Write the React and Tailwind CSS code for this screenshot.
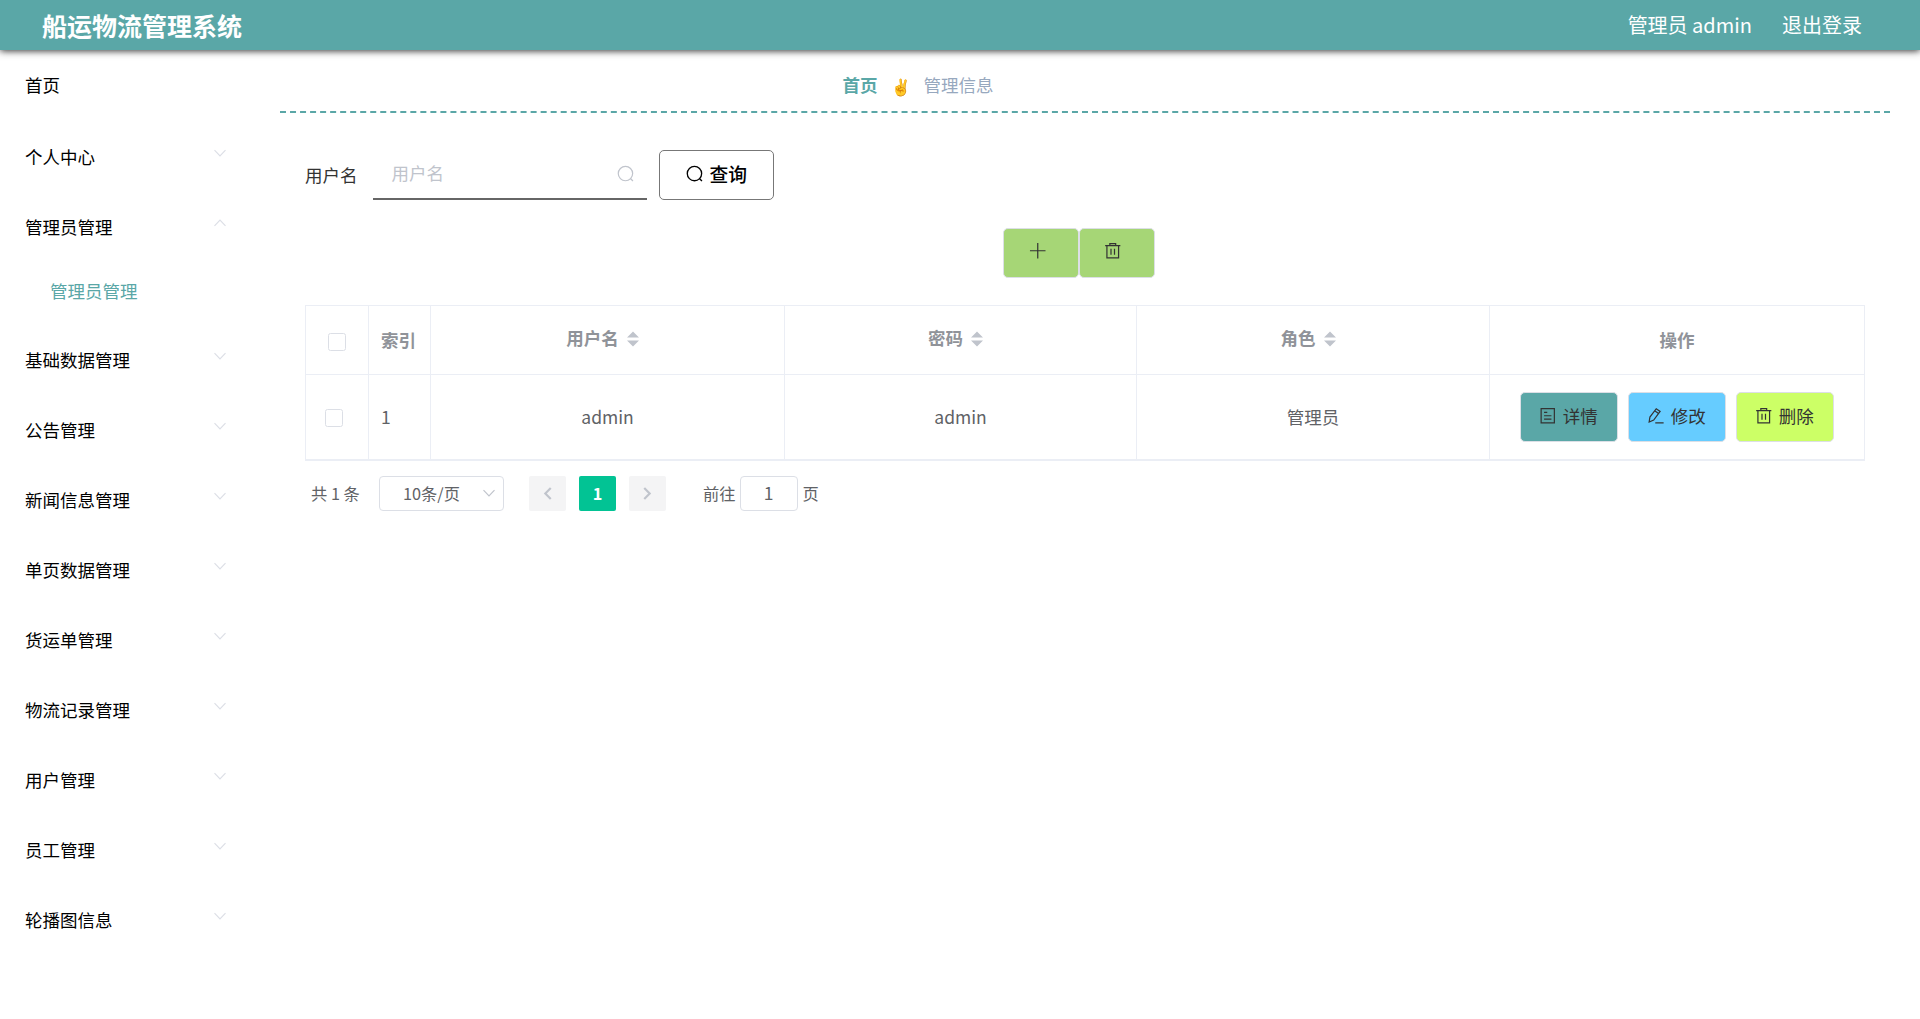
const menu = ['基础数据管理', '公告管理', '新闻信息管理', '单页数据管理', '货运单管理', '物流记录管理', '用户管理', '员工管理', '轮播图信息'];

const Icon = ({ className = '', children, sw = 1.25 }) => (
  <svg viewBox="0 0 18 18" className={`h-[17.5px] w-[17.5px] shrink-0 ${className}`} fill="none" stroke="currentColor" strokeWidth={sw}>
    {children}
  </svg>
);
const Search = ({ className, sw }) => (
  <Icon className={className} sw={sw}><circle cx="8.7" cy="8.8" r="7.4" /><path d="M13.8 13.9l2.6 2.6" /></Icon>
);
const Trash = ({ className }) => (
  <Icon className={className}><path d="M1.2 3.8h15.6M6 3.8V1.6h6v2.2M3 3.8v12.6h12V3.8M7.2 7v6M10.8 7v6" /></Icon>
);
const Plus = ({ className }) => <Icon className={className}><path d="M9 1v16M1 9h16" /></Icon>;
const Doc = () => <Icon><path d="M2.2 1.6h13.6v14.8H2.2zM5.2 5.5h3.3M5.2 9h7.6M5.2 12.5h7.6" /></Icon>;
const Edit = () => <Icon><path d="M2.2 15.4l.8-5 6.5-8.6 4 2.8-6.6 8.8zM7.9 3.9l4 2.8M8.5 16.4h8.6" /></Icon>;
const Chevron = ({ up, className = '' }) => (
  <svg viewBox="0 0 14 8" className={`h-2 w-3.5 ${className}`} fill="none" stroke="currentColor" strokeWidth="1.2">
    <path d={up ? 'M1.5 6.8L7 1.2l5.5 5.6' : 'M1.5 1.2L7 6.8l5.5-5.6'} />
  </svg>
);

const MenuRow = ({ text, up }) => (
  <div className="flex h-[70px] items-center justify-between pl-[25px] pr-[23px]">
    <span>{text}</span>
    <Chevron up={up} className="mb-2 text-[#dcdfe6]" />
  </div>
);

const Checkbox = () => <span className="block h-[18px] w-[18px] rounded-[2.5px] border border-[#dcdfe6] bg-white" />;
const Sort = () => (
  <svg viewBox="0 0 12 16" className="ml-2 mt-px h-4 w-3" fill="#c0c4cc"><path d="M0 6.5L6 .5l6 6zM0 9.5l6 6 6-6z" /></svg>
);
const SortHead = ({ text }) => (
  <div className="flex items-center justify-center border-r border-[#ebeef5] pb-1 pr-[10px]">{text}<Sort /></div>
);
const Action = ({ color, icon, text }) => (
  <button className={`flex h-[50px] w-[98px] items-center justify-center gap-[6px] rounded-[5px] border border-[#dcdfe6] pb-px text-[#333] ${color}`}>
    {icon}<span>{text}</span>
  </button>
);

export default function App() {
  return (
    <div className="h-[1019px] w-full overflow-hidden bg-white font-['Noto_Sans_CJK_SC',sans-serif] text-[17.5px] leading-normal text-black">
      <header className="relative flex h-[50px] items-center justify-between bg-[#5aa7a7] pl-[42px] pr-[58px] text-white shadow-[0_1px_7px_#333]">
        <h1 className="pt-[2px] text-[25px] font-bold">船运物流管理系统</h1>
        <div className="flex gap-[30px] text-[20px]"><span>管理员 admin</span><span>退出登录</span></div>
      </header>
      <div className="flex">
        <aside className="w-[250px]">
          <div className="flex h-[72px] items-center pb-[2px] pl-[25px]">首页</div>
          <MenuRow text="个人中心" />
          <MenuRow text="管理员管理" up />
          <div className="flex h-[63px] items-center pb-1 pl-[50px] text-[#5aa7a7]">管理员管理</div>
          {menu.map((m) => <MenuRow key={m} text={m} />)}
        </aside>
        <main className="ml-[30px] w-[1610px]">
          <nav className="flex h-[63px] items-center justify-center border-b-2 border-dashed border-[#5aa7a7] pr-[334px] pt-[10px]">
            <b className="text-[#5aa7a7]">首页</b>
            <span className="mx-[13px] text-[16px]">✌</span>
            <span className="text-[#97a8be]">管理信息</span>
          </nav>
          <section className="px-[25px]">
            <div className="flex h-[87px] items-end">
              <label className="mb-3 text-[#333]">用户名</label>
              <div className="ml-[15px] flex h-[50px] w-[274px] items-center justify-between border-b-2 border-[#666] pb-[2px] pl-[19px] pr-[12px] text-[#c0c4cc]">
                <span>用户名</span><Search className="mt-px" />
              </div>
              <button className="ml-3 flex h-[50px] w-[115px] items-center justify-center gap-[6px] rounded-[5px] border border-[#777] pb-[2px] pl-px text-[18.75px] font-medium"><Search sw={1.35} />查询</button>
            </div>
            <div className="mt-7 flex justify-center pr-[13px]">
              <button className="flex h-[50px] w-[76px] items-center justify-center rounded-[5px] border border-[#dcdfe6] bg-[#a6d676] pb-[4px] pr-[6px] text-[#333]"><Plus /></button>
              <button className="flex h-[50px] w-[76px] items-center justify-center rounded-[5px] border border-[#dcdfe6] bg-[#a6d676] pb-[4px] pr-[7px] text-[#333]"><Trash /></button>
            </div>
            <div className="mt-[27px] w-[1560px] border border-b-2 border-[#ebeef5] text-[#606266]">
              <div className="grid h-[69px] grid-cols-[63px_62px_354px_352px_353px_1fr] border-b border-[#ebeef5] font-bold text-[#909399]">
                <div className="flex items-center justify-center border-r border-[#ebeef5] pt-1"><Checkbox /></div>
                <div className="flex items-center border-r border-[#ebeef5] pl-3">索引</div>
                <SortHead text="用户名" /><SortHead text="密码" /><SortHead text="角色" />
                <div className="flex items-center justify-center">操作</div>
              </div>
              <div className="grid h-[84px] grid-cols-[63px_62px_354px_352px_353px_1fr]">
                <div className="flex items-center justify-center border-r border-[#ebeef5] pr-[6px] pt-[2px]"><Checkbox /></div>
                <div className="flex items-center border-r border-[#ebeef5] pl-3">1</div>
                <div className="flex items-center justify-center border-r border-[#ebeef5]">admin</div>
                <div className="flex items-center justify-center border-r border-[#ebeef5]">admin</div>
                <div className="flex items-center justify-center border-r border-[#ebeef5]">管理员</div>
                <div className="flex items-center justify-center gap-[10px] pb-px pr-px">
                  <Action color="bg-[#5aa7a7]" icon={<Doc />} text="详情" />
                  <Action color="bg-[#66ccff]" icon={<Edit />} text="修改" />
                  <Action color="bg-[#ccff66]" icon={<Trash />} text="删除" />
                </div>
              </div>
            </div>
            <div className="mt-[14px] flex h-[36px] items-center pl-1.5 text-[16.25px] text-[#606266]">
              <span className="w-[68px]">共 1 条</span>
              <div className="mt-px flex h-[35px] w-[125px] items-center justify-between rounded-[4px] border border-[#dcdfe6] pb-px pl-[23px] pr-[7px]">10条/页<Chevron className="text-[#c0c4cc]" /></div>
              <div className="ml-[25px] flex h-[35px] w-[37px] items-center justify-center rounded-[2px] bg-[#f4f4f5] pr-px text-[#c0c4cc]"><svg viewBox="0 0 8 12" className="h-[13px] w-[9px]" fill="none" stroke="currentColor" strokeWidth="2"><path d="M7 1L2 6l5 5" /></svg></div>
              <div className="ml-[13px] flex h-[35px] w-[37px] items-center justify-center rounded-[2px] bg-[#02c394] font-bold text-white">1</div>
              <div className="ml-[13px] flex h-[35px] w-[37px] items-center justify-center rounded-[2px] bg-[#f4f4f5] text-[#c0c4cc]"><svg viewBox="0 0 8 12" className="h-[13px] w-[9px]" fill="none" stroke="currentColor" strokeWidth="2"><path d="M1 1l5 5-5 5" /></svg></div>
              <span className="ml-[37px]">前往</span>
              <div className="ml-[4px] mt-px flex h-[35px] w-[58px] items-center justify-center rounded-[4px] border border-[#dcdfe6] pb-px text-[17.5px]">1</div>
              <span className="ml-[5px]">页</span>
            </div>
          </section>
        </main>
      </div>
    </div>
  );
}
